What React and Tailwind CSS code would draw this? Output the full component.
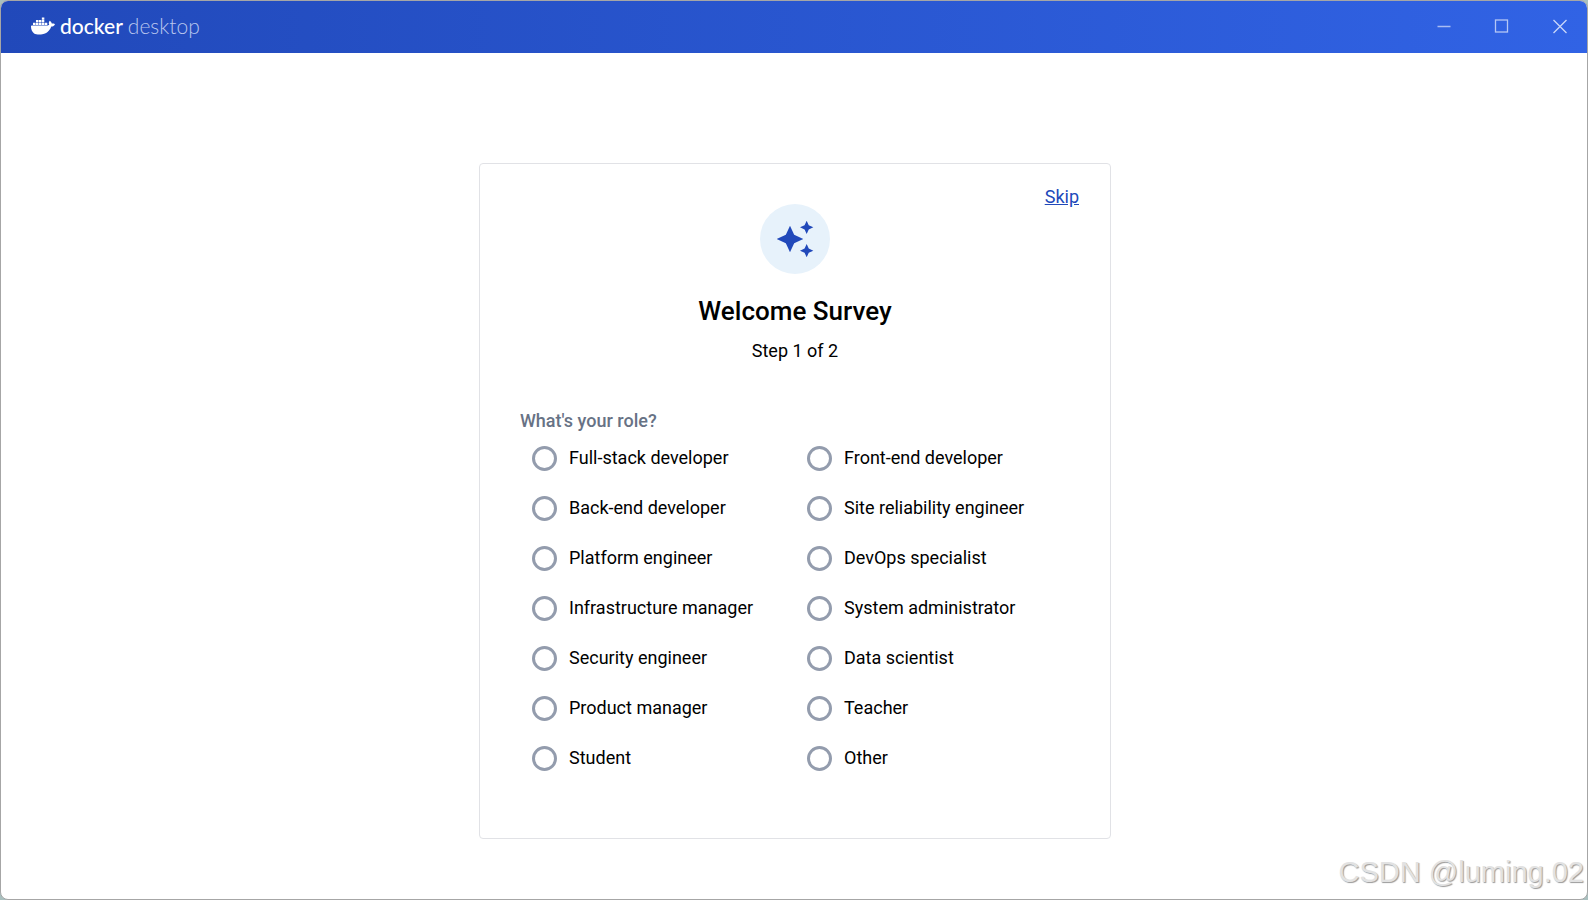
import { SiDocker } from "react-icons/si";

const roles = [
  "Full-stack developer",
  "Front-end developer",
  "Back-end developer",
  "Site reliability engineer",
  "Platform engineer",
  "DevOps specialist",
  "Infrastructure manager",
  "System administrator",
  "Security engineer",
  "Data scientist",
  "Product manager",
  "Teacher",
  "Student",
  "Other",
];

function TitleBar() {
  return (
    <header className="flex h-[52px] items-center justify-between bg-linear-to-r from-[#2149ba] to-[#3163e5] pb-[3px] pl-[30px]">
      <div className="flex items-center gap-[5px] font-['Lato',sans-serif] text-[21px] leading-6 text-white">
        <SiDocker className="size-6" aria-hidden="true" />
        <span className="flex gap-[5px]">
          <span className="font-medium">docker</span>
          <span className="font-light text-[#b9c6ee]">desktop</span>
        </span>
      </div>
      <div className="flex h-full gap-[2px]">
        <button type="button" aria-label="Minimize" className="flex w-14 items-center justify-center">
          <svg className="size-4" viewBox="0 0 16 16" fill="none" stroke="#a9bcf3">
            <path d="M2.5 8.5h13" strokeWidth="1.5" />
          </svg>
        </button>
        <button type="button" aria-label="Maximize" className="flex w-14 items-center justify-center">
          <svg className="size-4" viewBox="0 0 16 16" fill="none" stroke="#b5c6f5">
            <rect x="2.5" y="2" width="12" height="12" strokeWidth="1.3" />
          </svg>
        </button>
        <button type="button" aria-label="Close" className="flex w-14 items-center justify-center">
          <svg className="size-4" viewBox="0 0 16 16" fill="none" stroke="#c9d6f8">
            <path d="M2.5 2l13 13M15.5 2l-13 13" strokeWidth="1.3" />
          </svg>
        </button>
      </div>
    </header>
  );
}

function Sparkles() {
  return (
    <div className="flex size-[70px] items-center justify-center rounded-full bg-[#e7f2fb]">
      <svg className="size-10" viewBox="0 0 24 24" fill="#2149ba" aria-hidden="true">
        <path d="m19 9 1.25-2.75L23 5l-2.75-1.25L19 1l-1.25 2.75L15 5l2.75 1.25L19 9zm-7.5.5L9 4 6.5 9.5 1 12l5.5 2.5L9 20l2.5-5.5L17 12l-5.5-2.5zM19 15l-1.25 2.75L15 19l2.75 1.25L19 23l1.25-2.75L23 19l-2.75-1.25L19 15z" />
      </svg>
    </div>
  );
}

function RoleOption({ label }) {
  return (
    <label className="flex h-[50px] items-center gap-3 pl-3 text-[18px] leading-6">
      <input
        type="radio"
        name="role"
        value={label}
        className="size-[25px] shrink-0 appearance-none rounded-full border-[3px] border-[#939cad] checked:border-[7px] checked:border-[#2149ba]"
      />
      {label}
    </label>
  );
}

export default function App() {
  return (
    <div className="min-h-screen bg-[#a9c0bf] font-['Roboto',sans-serif] text-black">
      <div className="relative flex min-h-screen flex-col overflow-hidden rounded-lg border border-[#a6a6a6] bg-white">
        <TitleBar />
        <main className="flex flex-1 justify-center pt-[110px] pr-4 pb-[60px] pl-[18px]">
          <section className="relative flex w-full max-w-[632px] flex-col items-center self-start rounded-[4px] border border-[#e1e2e6] px-10 pt-10 pb-[55px]">
            <a href="#skip" className="absolute top-[21px] right-[31px] text-[18px] leading-6 text-[#2149ba] underline">
              Skip
            </a>
            <Sparkles />
            <h1 className="mt-[21px] text-[26px] leading-8 font-medium">Welcome Survey</h1>
            <p className="mt-3 text-[18px] leading-6">Step 1 of 2</p>
            <fieldset className="mt-[46px] w-full">
              <legend className="text-[18px] leading-6 font-medium text-[#677285]">What&apos;s your role?</legend>
              <div className="grid grid-cols-2">
                {roles.map((role) => (
                  <RoleOption key={role} label={role} />
                ))}
              </div>
            </fieldset>
          </section>
        </main>
        <div className="absolute right-[3px] bottom-[9px] font-['Liberation_Sans',sans-serif] text-[29px] leading-9 text-[#e2e2e2] [text-shadow:1px_1px_1px_#999]">
          CSDN @luming.02
        </div>
      </div>
    </div>
  );
}
